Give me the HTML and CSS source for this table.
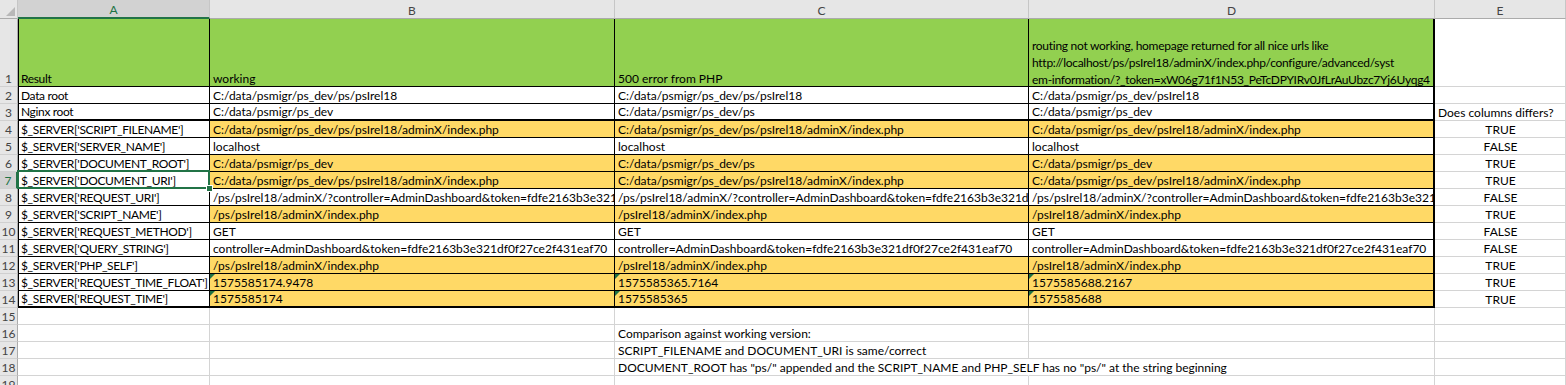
FILE: index.html
```html
<!DOCTYPE html>
<html>
<head>
<meta charset="utf-8">
<link rel="stylesheet" href="styles.css">
</head>
<body>
<div class="sheet">
  <div class="corner"><span class="corner-tri"></span></div>
  <div class="ch sel">A</div>
  <div class="ch">B</div>
  <div class="ch">C</div>
  <div class="ch">D</div>
  <div class="ch">E</div>

  <div class="rh r1">1</div>
  <div class="c t a g">Result</div>
  <div class="c t g">working</div>
  <div class="c t g">500 error from PHP</div>
  <div class="c t d g wrap">routing not working, homepage returned for all nice urls like<br>http://localhost/ps/psIrel18/adminX/index.php/configure/advanced/syst<br>em-information/?_token=xW06g71f1N53_PeTcDPYIRv0JfLrAuUbzc7Yj6Uyqg4</div>
  <div class="c"></div>

  <div class="rh">2</div>
  <div class="c t a">Data root</div>
  <div class="c t">C:/data/psmigr/ps_dev/ps/psIrel18</div>
  <div class="c t">C:/data/psmigr/ps_dev/ps/psIrel18</div>
  <div class="c t d">C:/data/psmigr/ps_dev/psIrel18</div>
  <div class="c"></div>

  <div class="rh">3</div>
  <div class="c t a bb">Nginx root</div>
  <div class="c t bb">C:/data/psmigr/ps_dev</div>
  <div class="c t bb">C:/data/psmigr/ps_dev/ps</div>
  <div class="c t d bb">C:/data/psmigr/ps_dev</div>
  <div class="c">Does columns differs?</div>

  <div class="rh">4</div>
  <div class="c t a">$_SERVER['SCRIPT_FILENAME']</div>
  <div class="c t o">C:/data/psmigr/ps_dev/ps/psIrel18/adminX/index.php</div>
  <div class="c t o">C:/data/psmigr/ps_dev/ps/psIrel18/adminX/index.php</div>
  <div class="c t d o">C:/data/psmigr/ps_dev/psIrel18/adminX/index.php</div>
  <div class="c ctr">TRUE</div>

  <div class="rh">5</div>
  <div class="c t a">$_SERVER['SERVER_NAME']</div>
  <div class="c t">localhost</div>
  <div class="c t">localhost</div>
  <div class="c t d">localhost</div>
  <div class="c ctr">FALSE</div>

  <div class="rh">6</div>
  <div class="c t a">$_SERVER['DOCUMENT_ROOT']</div>
  <div class="c t o">C:/data/psmigr/ps_dev</div>
  <div class="c t o">C:/data/psmigr/ps_dev/ps</div>
  <div class="c t d o">C:/data/psmigr/ps_dev</div>
  <div class="c ctr">TRUE</div>

  <div class="rh rsel">7</div>
  <div class="c t a active">$_SERVER['DOCUMENT_URI']<span class="handle"></span></div>
  <div class="c t o">C:/data/psmigr/ps_dev/ps/psIrel18/adminX/index.php</div>
  <div class="c t o">C:/data/psmigr/ps_dev/ps/psIrel18/adminX/index.php</div>
  <div class="c t d o">C:/data/psmigr/ps_dev/psIrel18/adminX/index.php</div>
  <div class="c ctr">TRUE</div>

  <div class="rh">8</div>
  <div class="c t a">$_SERVER['REQUEST_URI']</div>
  <div class="c t">/ps/psIrel18/adminX/?controller=AdminDashboard&amp;token=fdfe2163b3e321df0f27ce2f431eaf70</div>
  <div class="c t">/ps/psIrel18/adminX/?controller=AdminDashboard&amp;token=fdfe2163b3e321df0f27ce2f431eaf70</div>
  <div class="c t d">/ps/psIrel18/adminX/?controller=AdminDashboard&amp;token=fdfe2163b3e321df0f27ce2f431eaf70</div>
  <div class="c ctr">FALSE</div>

  <div class="rh">9</div>
  <div class="c t a">$_SERVER['SCRIPT_NAME']</div>
  <div class="c t o">/ps/psIrel18/adminX/index.php</div>
  <div class="c t o">/psIrel18/adminX/index.php</div>
  <div class="c t d o">/psIrel18/adminX/index.php</div>
  <div class="c ctr">TRUE</div>

  <div class="rh">10</div>
  <div class="c t a">$_SERVER['REQUEST_METHOD']</div>
  <div class="c t">GET</div>
  <div class="c t">GET</div>
  <div class="c t d">GET</div>
  <div class="c ctr">FALSE</div>

  <div class="rh">11</div>
  <div class="c t a">$_SERVER['QUERY_STRING']</div>
  <div class="c t">controller=AdminDashboard&amp;token=fdfe2163b3e321df0f27ce2f431eaf70</div>
  <div class="c t">controller=AdminDashboard&amp;token=fdfe2163b3e321df0f27ce2f431eaf70</div>
  <div class="c t d">controller=AdminDashboard&amp;token=fdfe2163b3e321df0f27ce2f431eaf70</div>
  <div class="c ctr">FALSE</div>

  <div class="rh">12</div>
  <div class="c t a">$_SERVER['PHP_SELF']</div>
  <div class="c t o">/ps/psIrel18/adminX/index.php</div>
  <div class="c t o">/psIrel18/adminX/index.php</div>
  <div class="c t d o">/psIrel18/adminX/index.php</div>
  <div class="c ctr">TRUE</div>

  <div class="rh">13</div>
  <div class="c t a">$_SERVER['REQUEST_TIME_FLOAT']</div>
  <div class="c t o tri">1575585174.9478</div>
  <div class="c t o tri">1575585365.7164</div>
  <div class="c t d o tri">1575585688.2167</div>
  <div class="c ctr">TRUE</div>

  <div class="rh">14</div>
  <div class="c t a bb">$_SERVER['REQUEST_TIME']</div>
  <div class="c t o tri bb">1575585174</div>
  <div class="c t o tri bb">1575585365</div>
  <div class="c t d o tri bb">1575585688</div>
  <div class="c ctr">TRUE</div>

  <div class="rh">15</div>
  <div class="c"></div><div class="c"></div><div class="c"></div><div class="c"></div><div class="c"></div>

  <div class="rh">16</div>
  <div class="c"></div><div class="c"></div>
  <div class="c">Comparison against working version:</div>
  <div class="c"></div><div class="c"></div>

  <div class="rh">17</div>
  <div class="c"></div><div class="c"></div>
  <div class="c">SCRIPT_FILENAME and DOCUMENT_URI is same/correct</div>
  <div class="c"></div><div class="c"></div>

  <div class="rh">18</div>
  <div class="c"></div><div class="c"></div>
  <div class="c spill">DOCUMENT_ROOT has "ps/" appended and the SCRIPT_NAME and PHP_SELF has no "ps/" at the string beginning</div>
  <div class="c"></div><div class="c"></div>

  <div class="rh">19</div>
  <div class="c"></div><div class="c"></div><div class="c"></div><div class="c"></div><div class="c"></div>
</div>
</body>
</html>
```

FILE: styles.css
```css
html, body {
  margin: 0;
  padding: 0;
  background: #ffffff;
}

.sheet {
  display: grid;
  grid-template-columns: 18px 192px 405px 414px 406px 131px;
  grid-template-rows: 19px 68px;
  grid-auto-rows: 17px;
  font-family: Lato, "Open Sans", sans-serif;
  font-size: 12px;
  color: #000;
  overflow: hidden;
  height: 385px;
}

.corner {
  background: #e6e6e6;
  border-right: 1px solid #c6c6c6;
  border-bottom: 1px solid #ababab;
  box-sizing: border-box;
  position: relative;
}
.corner-tri {
  position: absolute;
  right: 2px;
  bottom: 2px;
  width: 0;
  height: 0;
  border-left: 9px solid transparent;
  border-bottom: 9px solid #b8b8b8;
}

.ch {
  background: #e6e6e6;
  border-right: 1px solid #c6c6c6;
  border-bottom: 1px solid #ababab;
  box-sizing: border-box;
  display: flex;
  align-items: center;
  justify-content: center;
  color: #444;
  font-size: 12px;
  padding-top: 2px;
}
.ch.sel {
  background: #d2d2d2;
  color: #217346;
  border-bottom: 2px solid #217346;
}

.rh {
  background: #e6e6e6;
  border-right: 1px solid #ababab;
  border-bottom: 1px solid #d0d0d0;
  box-sizing: border-box;
  display: flex;
  align-items: flex-end;
  justify-content: center;
  color: #444;
  font-size: 12px;
  line-height: 15px;
}
.rh.rsel {
  background: #d2d2d2;
  color: #217346;
  border-right: 2px solid #217346;
}

.c {
  box-sizing: border-box;
  border-right: 1px solid #d4d4d4;
  border-bottom: 1px solid #d4d4d4;
  display: flex;
  align-items: flex-end;
  white-space: nowrap;
  overflow: hidden;
  padding: 0 2px 0 3px;
  line-height: 15px;
  position: relative;
}

.c.t {
  border-right-color: #000;
  border-bottom-color: #000;
}
.c.a {
  border-left: 1px solid #000;
  padding-left: 2px;
  letter-spacing: -0.35px;
}
.c.d {
  border-right: 2px solid #000;
}
.c.bb {
  border-bottom: 2px solid #000;
}
.c.g { background: #92d050; }
.c.o { background: #ffd966; }
.c.ctr { justify-content: center; }

.c.wrap {
  line-height: 17px;
  display: block;
  padding-top: 18px;
  letter-spacing: -0.28px;
}

.c.spill {
  overflow: visible;
  border-right-color: transparent;
  z-index: 2;
}

.c.tri::before {
  content: "";
  position: absolute;
  left: 0;
  top: 0;
  width: 0;
  height: 0;
  border-top: 5px solid #1e7145;
  border-right: 5px solid transparent;
}

.c.active {
  overflow: visible;
  z-index: 3;
}
.c.active::after {
  content: "";
  position: absolute;
  left: -2px;
  top: -2px;
  right: -1px;
  bottom: -1px;
  border: 2px solid #217346;
  pointer-events: none;
}
.handle {
  position: absolute;
  right: -4px;
  bottom: -4px;
  width: 5px;
  height: 5px;
  background: #217346;
  border: 1px solid #fff;
  z-index: 4;
}
```
